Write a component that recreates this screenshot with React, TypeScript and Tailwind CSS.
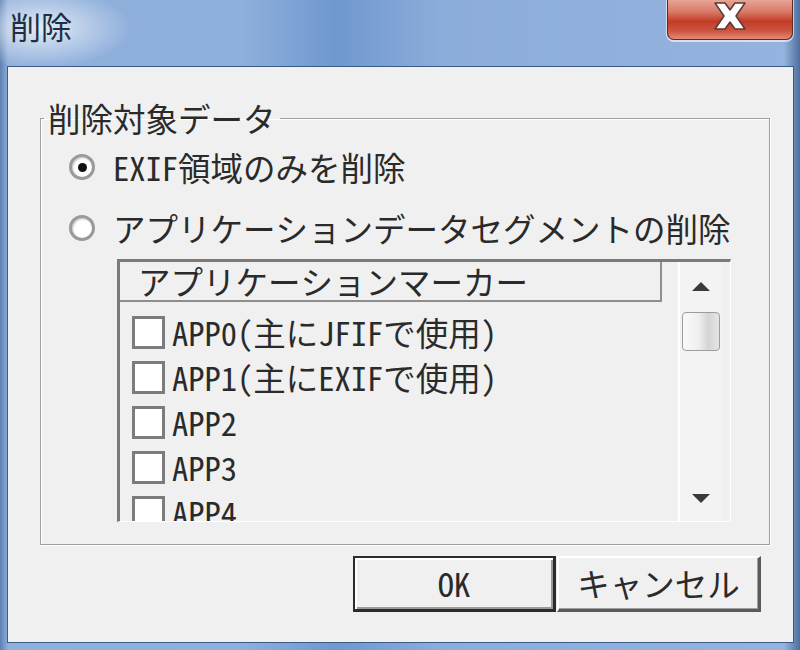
import React from "react";

const items = [
  "APP0(主にJFIFで使用)",
  "APP1(主にEXIFで使用)",
  "APP2",
  "APP3",
  "APP4",
];

const Radio: React.FC<{ checked?: boolean; label: string }> = ({ checked, label }) => (
  <div className="flex h-[36px] items-center gap-[18px]">
    <span className="flex h-[26px] w-[26px] items-center justify-center rounded-full border-[3px] border-[#9a9a9a] bg-white shadow-[inset_1px_1px_2px_#c4c4c4]">
      {checked && <span className="h-[9px] w-[9px] rounded-full bg-[#111]" />}
    </span>
    <span className="whitespace-nowrap">{label}</span>
  </div>
);

const Arrow: React.FC<{ up?: boolean }> = ({ up }) => (
  <svg width="18" height="9" viewBox="0 0 18 9">
    {up ? <path d="M0 9 L9 0 L18 9 Z" fill="#3a3a3a" /> : <path d="M0 0 L18 0 L9 9 Z" fill="#3a3a3a" />}
  </svg>
);

export default function App() {
  return (
    <div className="flex h-[650px] w-[800px] flex-col overflow-hidden bg-[linear-gradient(90deg,#5d80b4_0%,#90afdb_1%,#8fb0dc_30%,#6f98d0_42%,#8cacda_55%,#94b3de_98%,#4d6f9f_100%)] font-['Noto_Sans_Mono_CJK_JP','Noto_Sans_CJK_JP',sans-serif] text-[#2a2a2a]">
      {/* title bar */}
      <div className="flex h-[66px] items-start justify-between bg-[radial-gradient(ellipse_90px_40px_at_40px_28px,rgba(255,255,255,0.75),rgba(255,255,255,0))]">
        <div className="pl-[10px] pt-[6px] text-[31px] leading-[40px] text-[#1f2f3f]">削除</div>
        <div className="mr-[7px] flex h-[40px] w-[126px] items-center justify-center rounded-b-[7px] border border-t-0 border-[#5b2a24] bg-[linear-gradient(180deg,#e9a496_0%,#d87a68_30%,#c23b26_55%,#cf5641_80%,#e48a75_100%)] shadow-[0_1px_0_1px_rgba(255,255,255,0.6)]">
          <svg width="36" height="30" viewBox="0 0 36 30" className="-mt-[8px]">
            <path
              d="M3 2 L13 2 L18 9 L23 2 L33 2 L24 15 L33 28 L23 28 L18 21 L13 28 L3 28 L12 15 Z"
              fill="#fff"
              stroke="#5a3a36"
              strokeWidth="1.5"
              strokeLinejoin="round"
            />
          </svg>
        </div>
      </div>

      {/* client area */}
      <div className="mb-[7px] ml-[7px] mr-[6px] flex flex-1 flex-col border border-[#3b5a84] bg-[#f0f0f0] px-[32px] pt-[33px] text-[32.5px]">
        <fieldset className="border border-[#a0a0a0] pb-[22px] pl-[28px] pr-[38px] shadow-[1px_1px_0_#fff,inset_1px_1px_0_#fff]">
          <legend className="-ml-[25px] px-[4px] leading-[36px]">削除対象データ</legend>
          <div className="mt-[13px]">
            <Radio checked label="EXIF領域のみを削除" />
          </div>
          <div className="mt-[25px]">
            <Radio label="アプリケーションデータセグメントの削除" />
          </div>

          {/* list view */}
          <div className="ml-[48px] mt-[13px] flex h-[263px] border-b border-l-[3px] border-r border-t-[3px] border-b-white border-l-[#7a7a7a] border-r-white border-t-[#7a7a7a]">
            <div className="flex w-[558px] flex-col overflow-hidden">
              <div className="flex h-[40px] w-[542px] shrink-0 items-center border-b-2 border-r-2 border-[#8e8e8e] pl-[18px] leading-none">
                アプリケーションマーカー
              </div>
              <div className="flex flex-col pt-[8px]">
                {items.map((t) => (
                  <div key={t} className="flex h-[45px] shrink-0 items-center gap-[7px] pl-[12px]">
                    <span className="h-[33px] w-[33px] shrink-0 border-[3px] border-[#7c7c7c] bg-white" />
                    <span className="whitespace-nowrap">{t}</span>
                  </div>
                ))}
              </div>
            </div>
            <div className="flex w-[43px] flex-col items-center border-l-2 border-white bg-[#f3f3f3]">
              <div className="flex h-[48px] items-center justify-center">
                <Arrow up />
              </div>
              <div className="mt-[2px] h-[39px] w-[38px] rounded-[4px] border border-[#9c9c9c] bg-[linear-gradient(90deg,#fafafa_0%,#eeeeee_45%,#d4d4d4_70%,#e6e6e6_100%)]" />
              <div className="flex-1" />
              <div className="flex h-[46px] items-center justify-center">
                <Arrow />
              </div>
            </div>
          </div>
        </fieldset>

        {/* buttons */}
        <div className="mt-[11px] flex justify-end gap-[1px]">
          <button className="flex h-[56px] w-[203px] items-center justify-center border-2 border-b-[3px] border-r-[3px] border-[#2c2c2c] bg-[#f0f0f0] leading-none shadow-[inset_2px_2px_0_#fff,inset_-2px_-2px_0_#9a9a9a]">
            OK
          </button>
          <button className="flex h-[56px] w-[204px] items-center justify-center border-b-[3px] border-l-2 border-r-[3px] border-t-2 border-b-[#5a5a5a] border-l-white border-r-[#5a5a5a] border-t-white bg-[#f0f0f0] leading-none shadow-[inset_-1px_-1px_0_#a0a0a0]">
            キャンセル
          </button>
        </div>
      </div>
    </div>
  );
}
